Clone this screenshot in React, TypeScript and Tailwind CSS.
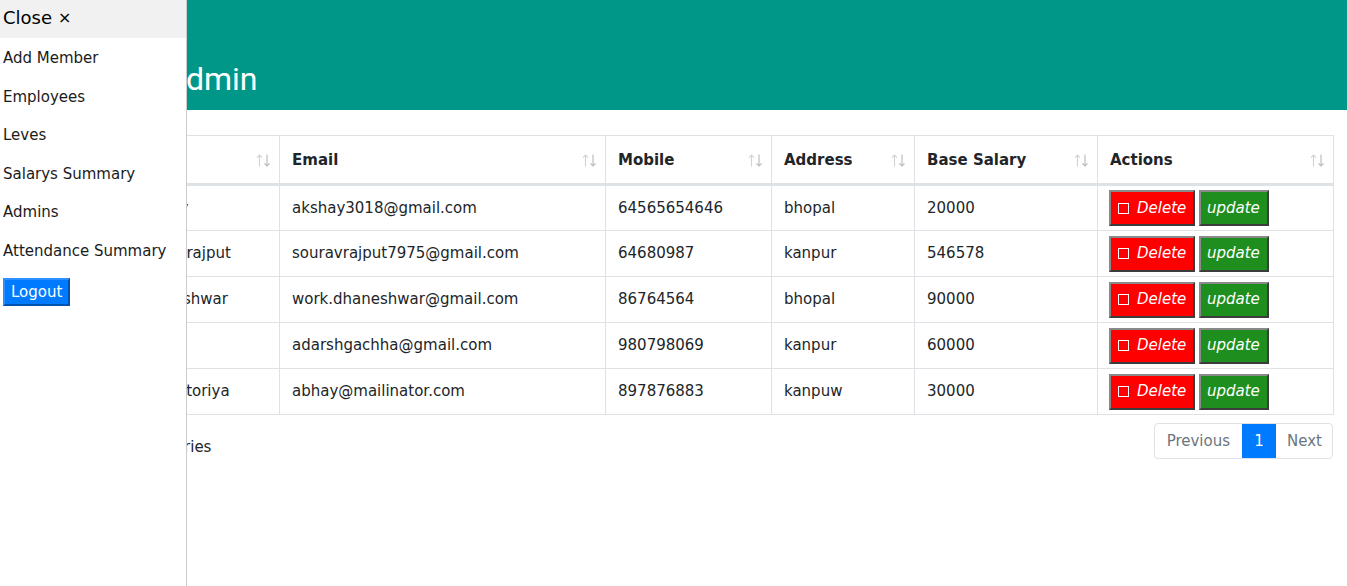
import React from 'react';

type Employee = {
  id: number;
  name: string;
  email: string;
  mobile: string;
  address: string;
  salary: string;
};

const employees: Employee[] = [
  { id: 1, name: 'Akshay', email: 'akshay3018@gmail.com', mobile: '64565654646', address: 'bhopal', salary: '20000' },
  { id: 2, name: 'Souravrajput', email: 'souravrajput7975@gmail.com', mobile: '64680987', address: 'kanpur', salary: '546578' },
  { id: 3, name: 'Dhaneshwar', email: 'work.dhaneshwar@gmail.com', mobile: '86764564', address: 'bhopal', salary: '90000' },
  { id: 4, name: 'adarsh', email: 'adarshgachha@gmail.com', mobile: '980798069', address: 'kanpur', salary: '60000' },
  { id: 5, name: 'Abhay toriya', email: 'abhay@mailinator.com', mobile: '897876883', address: 'kanpuw', salary: '30000' },
];

const columns = [
  { label: '#', width: 'w-[107px]' },
  { label: 'Name', width: 'w-[158px]' },
  { label: 'Email', width: 'w-[326px]' },
  { label: 'Mobile', width: 'w-[166px]' },
  { label: 'Address', width: 'w-[143px]' },
  { label: 'Base Salary', width: 'w-[183px]' },
  { label: 'Actions', width: 'w-[236px]' },
];

const menu = ['Add Member', 'Employees', 'Leves', 'Salarys Summary', 'Admins', 'Attendance Summary'];

function SortIcon() {
  return (
    <svg width="15" height="13" viewBox="0 0 15 13" fill="none" strokeWidth="1.1">
      <g stroke="#cfd2d6">
        <path d="M3.5 12.5V1" />
        <path d="M1 3.6L3.5 1L6 3.6" />
      </g>
      <g stroke="#b4b8bd">
        <path d="M11 0.5V12" />
        <path d="M8.5 9.4L11 12L13.5 9.4" />
      </g>
    </svg>
  );
}

function Sidebar() {
  return (
    <aside className="absolute left-0 top-0 z-10 flex h-full w-[187px] flex-col border-r border-[#cccccc] bg-white text-[15px] leading-[22.5px] text-[#1b1b1b]">
      <div className="flex h-[38px] items-center bg-[#f1f1f1] pb-[2px] pl-[3px] text-[18px] text-black">
        Close <span className="ml-[6px] text-[16px]">×</span>
      </div>
      <div className="pt-px">
        {menu.map(item => (
          <div key={item} className="py-2 pl-[3px]">
            {item}
          </div>
        ))}
      </div>
      <div className="pl-[3px] pt-[8px]">
        <button className="h-[28px] border-2 border-t-[#2e8fff] border-l-[#2e8fff] border-b-[#0052b0] border-r-[#0052b0] bg-[#007bff] px-[6px] text-[15px] leading-[20px] text-white">
          Logout
        </button>
      </div>
    </aside>
  );
}

const cell = 'border border-[#dee2e6] px-3 py-0';

export default function App() {
  return (
    <div
      className="relative h-[586px] w-[1347px] overflow-hidden bg-white text-[15px] leading-[22.5px] text-[#212529]"
      style={{ fontFamily: '"DejaVu Sans", Verdana, sans-serif' }}
    >
      <Sidebar />

      {/* Header */}
      <header className="h-[110px] bg-[#009688] pl-[165px] pt-[63px] text-white">
        <h1
          className="text-[32px] font-normal leading-[32px]"
          style={{ fontFamily: 'Roboto, "Segoe UI", Arial, sans-serif' }}
        >
          Admin
        </h1>
      </header>

      {/* Content */}
      <main className="px-[14px] pt-[25px]">
        <table className="w-[1319px] table-fixed border-collapse border border-[#dee2e6]">
          <thead>
            <tr>
              {columns.map(col => (
                <th
                  key={col.label}
                  className={`${col.width} h-[49px] border-x border-t border-b-[3px] border-[#dee2e6] p-0 text-left font-bold`}
                >
                  <div className="flex items-center justify-between pl-3 pr-2 pt-px">
                    <span>{col.label}</span>
                    <SortIcon />
                  </div>
                </th>
              ))}
            </tr>
          </thead>
          <tbody>
            {employees.map(e => (
              <tr key={e.id}>
                <td className={`${cell} h-[46px]`}>{e.id}</td>
                <td className={`${cell} whitespace-nowrap`}>{e.name}</td>
                <td className={cell}>{e.email}</td>
                <td className={cell}>{e.mobile}</td>
                <td className={cell}>{e.address}</td>
                <td className={cell}>{e.salary}</td>
                <td className="border border-[#dee2e6] py-0 pl-[11px] pr-3">
                  <div className="flex gap-[4px]">
                    <button className="flex h-[36px] w-[86px] items-center border-2 border-t-[#8a8a8a] border-l-[#8a8a8a] border-b-[#3c3c3c] border-r-[#3c3c3c] bg-[#ff0000] pl-[7px] text-[15px] italic text-white">
                      <span className="mr-[8px] inline-block h-[11px] w-[11px] border border-white" />
                      Delete
                    </button>
                    <button className="flex h-[36px] w-[70px] items-center border-2 border-t-[#8a8a8a] border-l-[#8a8a8a] border-b-[#3c3c3c] border-r-[#3c3c3c] bg-[#1e8e1e] pl-[6px] text-[15px] italic text-white">
                      update
                    </button>
                  </div>
                </td>
              </tr>
            ))}
          </tbody>
        </table>

        <div className="flex items-start justify-between pt-[8px]">
          <div className="-ml-[5px] pt-[13px]">Showing 1 to 5 of 5 entries</div>
          <div className="flex h-[36px] overflow-hidden rounded border border-[#dee2e6] text-[15px]">
            <span className="flex items-center px-3 text-[#6c757d]">Previous</span>
            <span className="flex w-[34px] items-center justify-center bg-[#007bff] text-white">1</span>
            <span className="flex items-center pl-[11px] pr-[10px] text-[#6c757d]">Next</span>
          </div>
        </div>
      </main>
    </div>
  );
}
